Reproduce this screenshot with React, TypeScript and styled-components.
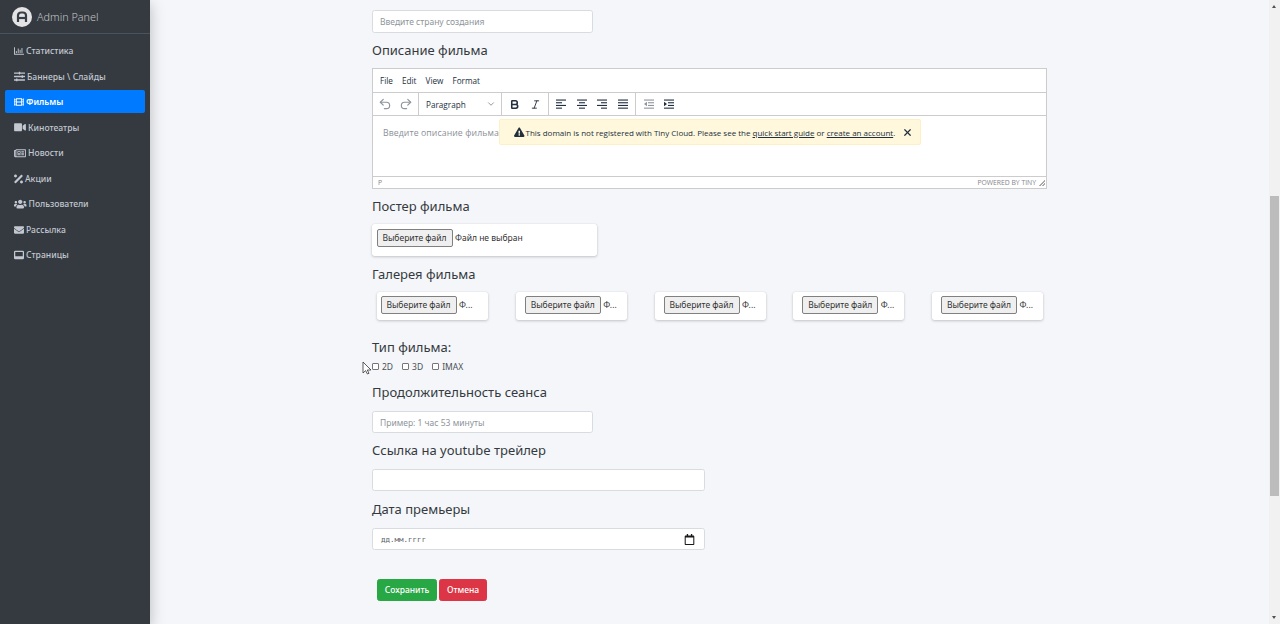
import React from 'react';
import styled, { createGlobalStyle } from 'styled-components';
import {
  FaRegChartBar,
  FaSlidersH,
  FaFilm,
  FaVideo,
  FaRegNewspaper,
  FaPercentage,
  FaUsers,
  FaEnvelope,
  FaExclamationTriangle,
  FaRegCalendar,
} from 'react-icons/fa';
import { Undo2, Redo2, Bold, Italic, ChevronDown, X } from 'lucide-react';

const GlobalStyle = createGlobalStyle`
  * { box-sizing: border-box; }
  html, body { margin: 0; height: 624px; overflow: hidden; background: #f4f6f9; }
  body { font-family: "Noto Sans", "Open Sans", sans-serif; color: #212529; }
`;

const Shell = styled.div`
  display: flex;
  height: 624px;
  width: 1280px;
`;

const Sidebar = styled.aside`
  width: 150px;
  flex: none;
  background: #343a40;
  box-shadow: 0 4px 14px rgba(0, 0, 0, 0.25);
`;

const Brand = styled.div`
  height: 34px;
  display: flex;
  align-items: center;
  gap: 5px;
  padding-left: 12px;
  border-bottom: 1px solid #4b545c;
  color: rgba(255, 255, 255, 0.7);
  font-size: 10.8px;
  font-weight: 300;
`;

const Nav = styled.nav`
  display: flex;
  flex-direction: column;
  gap: 2.5px;
  padding: 5px 5px 0;
`;

const NavItem = styled.a<{ $active?: boolean; $iconWidth: number; $iconHeight: number }>`
  height: 23px;
  display: flex;
  align-items: center;
  gap: 2px;
  padding: 1px 0 0 9px;
  border-radius: 2px;
  font-size: 8.6px;
  font-weight: ${(p) => (p.$active ? 600 : 500)};
  color: ${(p) => (p.$active ? '#fff' : '#c2c7d0')};
  background: ${(p) => (p.$active ? '#007bff' : 'transparent')};
  svg {
    width: ${(p) => p.$iconWidth}px;
    height: ${(p) => p.$iconHeight}px;
    flex: none;
  }
`;

const Main = styled.main`
  flex: 1;
  padding: 10px 0 0 222px;
  overflow: hidden;
`;

const Form = styled.form`
  width: 675px;
  display: flex;
  flex-direction: column;
  align-items: flex-start;
`;

const Heading = styled.label<{ $top?: number; $bottom?: number }>`
  height: 24px;
  line-height: 23px;
  font-size: 13px;
  color: #343a40;
  margin-top: ${(p) => p.$top ?? 6}px;
  margin-bottom: ${(p) => p.$bottom ?? 6}px;
`;

const Input = styled.input<{ $wide?: boolean; $tall?: boolean }>`
  width: ${(p) => (p.$wide ? 333 : 221)}px;
  height: ${(p) => (p.$tall ? 23 : 22)}px;
  padding: 0 7px;
  background: #fff;
  border: 1px solid #d8dce1;
  border-radius: 2.5px;
  font-family: inherit;
  font-size: 8.5px;
  color: #495057;
  outline: none;
  &::placeholder { color: #8e959b; opacity: 1; }
`;

const DateBox = styled.div`
  width: 333px;
  height: 22px;
  padding: 0 9px 0 8px;
  display: flex;
  align-items: center;
  justify-content: space-between;
  background: #fff;
  border: 1px solid #d8dce1;
  border-radius: 2.5px;
  font-family: "DejaVu Sans Mono", monospace;
  font-size: 7.5px;
  color: #5c6369;
  svg { width: 11px; height: 11px; color: #1a1a1a; }
`;

const Editor = styled.div`
  width: 675px;
  height: 121px;
  display: flex;
  flex-direction: column;
  background: #fff;
  border: 1px solid #ccc;
  font-family: "Open Sans", sans-serif;
  color: #222f3e;
`;

const MenuBar = styled.div`
  height: 24px;
  flex: none;
  display: flex;
  align-items: center;
  gap: 9px;
  padding-left: 7px;
  font-size: 8.2px;
  border-bottom: 1px solid #ccc;
`;

const ToolBar = styled.div`
  height: 23px;
  flex: none;
  display: flex;
  border-bottom: 1px solid #ccc;
`;

const ToolGroup = styled.div<{ $width: number }>`
  width: ${(p) => p.$width}px;
  display: flex;
  align-items: center;
  justify-content: center;
  border-right: 1px solid #ccc;
  &:last-child { border-right: 0; }
`;

const ToolButton = styled.span<{ $muted?: boolean }>`
  width: 20.5px;
  height: 20px;
  display: flex;
  align-items: center;
  justify-content: center;
  color: ${(p) => (p.$muted ? '#8f959c' : '#222f3e')};
`;

const FormatSelect = styled.div`
  flex: 1;
  display: flex;
  align-items: center;
  justify-content: space-between;
  padding: 0 5px 0 7px;
  font-size: 8.2px;
  color: #222f3e;
  svg { color: #7e858d; }
`;

const EditArea = styled.div`
  position: relative;
  flex: 1;
  padding: 11px 10px;
  font-size: 8.7px;
  color: #8a9096;
  letter-spacing: 0.1px;
`;

const Toast = styled.div`
  position: absolute;
  top: 3px;
  left: 126px;
  width: 422px;
  height: 26px;
  display: flex;
  align-items: center;
  padding-left: 14px;
  background: #fff8dc;
  border: 1px solid #fdf0c4;
  border-radius: 2px;
  font-size: 8px;
  letter-spacing: 0;
  color: #222f3e;
  a { color: inherit; text-decoration: underline; }
  svg { flex: none; }
`;

const ToastText = styled.span`
  margin-left: 1px;
  white-space: nowrap;
`;

const ToastClose = styled.span`
  margin-left: 7px;
  display: flex;
  color: #222f3e;
`;

const StatusBar = styled.div`
  height: 12px;
  flex: none;
  display: flex;
  align-items: center;
  justify-content: space-between;
  padding: 0 1px 0 5px;
  border-top: 1px solid #ccc;
  font-size: 6.8px;
  color: #7f868d;
`;

const StatusRight = styled.span`
  display: flex;
  align-items: center;
  gap: 3px;
`;

const FileCard = styled.div<{ $width: number; $height: number; $inset: number; $top: number }>`
  width: ${(p) => p.$width}px;
  height: ${(p) => p.$height}px;
  display: flex;
  align-items: flex-start;
  gap: 2.5px;
  padding: ${(p) => p.$top}px 0 0 ${(p) => p.$inset}px;
  background: #fff;
  border-radius: 2.5px;
  box-shadow: 0 0 1px rgba(0, 0, 0, 0.13), 0 1px 3px rgba(0, 0, 0, 0.2);
  font-size: 8.5px;
  line-height: 18px;
  color: #333;
  overflow: hidden;
`;

const FileButton = styled.span`
  width: 76px;
  height: 18px;
  flex: none;
  display: flex;
  align-items: center;
  justify-content: center;
  background: #efefef;
  border: 1px solid #808080;
  border-radius: 2px;
  font-size: 8.5px;
  color: #333;
`;

const Gallery = styled.div`
  width: 666px;
  margin-left: 5px;
  display: flex;
  justify-content: space-between;
`;

const CheckRow = styled.div`
  position: relative;
  height: 12px;
  display: flex;
  align-items: center;
  gap: 9px;
  font-size: 8.5px;
  color: #4a5056;
`;

const CheckLabel = styled.span`
  display: flex;
  align-items: center;
  gap: 3px;
  input {
    appearance: none;
    width: 7px;
    height: 7px;
    margin: 0;
    background: #fff;
    border: 1px solid #767676;
    border-radius: 1px;
  }
`;

const Cursor = styled.svg`
  position: absolute;
  left: -10px;
  top: 1px;
`;

const Actions = styled.div`
  display: flex;
  gap: 2px;
  margin: 29px 0 0 5px;
`;

const Button = styled.button<{ $color: string; $width: number }>`
  width: ${(p) => p.$width}px;
  height: 22px;
  padding: 0 0 1px;
  border: 1px solid ${(p) => p.$color};
  border-radius: 2.5px;
  background: ${(p) => p.$color};
  color: #fff;
  font-family: inherit;
  font-size: 8.5px;
  font-weight: 500;
`;

const ScrollTrack = styled.div`
  position: relative;
  width: 11px;
  flex: none;
  background: #f1f1f1;
`;

const ScrollThumb = styled.div`
  width: 9px;
  height: 300px;
  margin: 196px 0 0 1px;
  background: #bcbcbc;
`;

const ScrollArrow = styled.span<{ $down?: boolean }>`
  position: absolute;
  left: 3px;
  ${(p) => (p.$down ? 'bottom: 5px;' : 'top: 5px;')}
  border-left: 2.5px solid transparent;
  border-right: 2.5px solid transparent;
  ${(p) => (p.$down ? 'border-top: 3px solid #505050;' : 'border-bottom: 3px solid #505050;')}
`;

const Logo = () => (
  <svg width="20" height="20" viewBox="0 0 20 20">
    <circle cx="10" cy="10" r="10" fill="#e4e4e4" />
    <path d="M6 15V8.5A3 3 0 0 1 9 5.5h2a3 3 0 0 1 3 3V15" fill="none" stroke="#3a3f45" strokeWidth="2.2" />
    <path d="M6 11h8" stroke="#3a3f45" strokeWidth="2.2" />
  </svg>
);

const PagesIcon = () => (
  <svg viewBox="0 0 12 10" fill="currentColor">
    <path
      fillRule="evenodd"
      d="M1.5 0h9A1.5 1.5 0 0 1 12 1.5v7A1.5 1.5 0 0 1 10.5 10h-9A1.5 1.5 0 0 1 0 8.500v-7A1.5 1.5 0 0 1 1.5 0zM1.500 1.500v5h9v-5z"
    />
  </svg>
);

const Lines = ({ rows }: { rows: [number, number][] }) => (
  <svg width="12" height="12" viewBox="0 0 12 12" fill="currentColor">
    {rows.map(([x, w], i) => (
      <rect key={i} x={x} y={1.5 + i * 2.7} width={w} height="1.1" />
    ))}
  </svg>
);

const IndentIcon = ({ out }: { out?: boolean }) => (
  <svg width="12" height="12" viewBox="0 0 12 12" fill="currentColor">
    <rect x="1" y="1.5" width="10" height="1.1" />
    <rect x="5" y="4.2" width="6" height="1.1" />
    <rect x="5" y="6.9" width="6" height="1.1" />
    <rect x="1" y="9.6" width="10" height="1.1" />
    <path d={out ? 'M4 3.8v4.4L1 6z' : 'M1 3.8v4.4L4 6z'} />
  </svg>
);

const navItems = [
  { icon: <FaRegChartBar />, label: 'Статистика', w: 10, h: 10 },
  { icon: <FaSlidersH />, label: 'Баннеры \\ Слайды', w: 11, h: 11 },
  { icon: <FaFilm />, label: 'Фильмы', active: true, w: 10, h: 10 },
  { icon: <FaVideo />, label: 'Кинотеатры', w: 12, h: 10.5 },
  { icon: <FaRegNewspaper />, label: 'Новости', w: 12, h: 10.5 },
  { icon: <FaPercentage />, label: 'Акции', w: 9, h: 12 },
  { icon: <FaUsers />, label: 'Пользователи', w: 12.5, h: 10 },
  { icon: <FaEnvelope />, label: 'Рассылка', w: 10, h: 10 },
  { icon: <PagesIcon />, label: 'Страницы', w: 10, h: 10 },
];

const App = () => (
  <Shell>
    <GlobalStyle />
    <Sidebar>
      <Brand>
        <Logo />
        Admin Panel
      </Brand>
      <Nav>
        {navItems.map((item) => (
          <NavItem key={item.label} $active={item.active} $iconWidth={item.w} $iconHeight={item.h}>
            {item.icon}
            {item.label}
          </NavItem>
        ))}
      </Nav>
    </Sidebar>
    <Main>
      <Form>
        <Input $tall placeholder="Введите страну создания" />
        <Heading $bottom={5}>Описание фильма</Heading>
        <Editor>
          <MenuBar>
            <span>File</span>
            <span>Edit</span>
            <span>View</span>
            <span>Format</span>
          </MenuBar>
          <ToolBar>
            <ToolGroup $width={46}>
              <ToolButton $muted><Undo2 size={14} /></ToolButton>
              <ToolButton $muted><Redo2 size={14} /></ToolButton>
            </ToolGroup>
            <ToolGroup $width={83}>
              <FormatSelect>
                Paragraph
                <ChevronDown size={10} />
              </FormatSelect>
            </ToolGroup>
            <ToolGroup $width={47}>
              <ToolButton><Bold size={11} strokeWidth={3.4} /></ToolButton>
              <ToolButton><Italic size={11} /></ToolButton>
            </ToolGroup>
            <ToolGroup $width={87}>
              <ToolButton><Lines rows={[[1, 10], [1, 6], [1, 10], [1, 6]]} /></ToolButton>
              <ToolButton><Lines rows={[[1, 10], [3, 6], [1, 10], [3, 6]]} /></ToolButton>
              <ToolButton><Lines rows={[[1, 10], [5, 6], [1, 10], [5, 6]]} /></ToolButton>
              <ToolButton><Lines rows={[[1, 10], [1, 10], [1, 10], [1, 10]]} /></ToolButton>
            </ToolGroup>
            <ToolGroup $width={46}>
              <ToolButton $muted><IndentIcon out /></ToolButton>
              <ToolButton><IndentIcon /></ToolButton>
            </ToolGroup>
          </ToolBar>
          <EditArea>
            Введите описание фильма
            <Toast>
              <FaExclamationTriangle size={10.5} />
              <ToastText>
                This domain is not registered with Tiny Cloud. Please see the <a>quick start guide</a> or{' '}
                <a>create an account</a>.
              </ToastText>
              <ToastClose><X size={11} strokeWidth={2.6} /></ToastClose>
            </Toast>
          </EditArea>
          <StatusBar>
            <span>P</span>
            <StatusRight>
              POWERED BY TINY
              <svg width="6" height="6" viewBox="0 0 6 6" fill="#555">
                <path d="M6 0v1L1 6H0zM6 3v1L4 6H3z" />
              </svg>
            </StatusRight>
          </StatusBar>
        </Editor>
        <Heading $bottom={5}>Постер фильма</Heading>
        <FileCard $width={225} $height={32} $inset={4.5} $top={5}>
          <FileButton>Выберите файл</FileButton>
          Файл не выбран
        </FileCard>
        <Heading $top={7} $bottom={5}>Галерея фильма</Heading>
        <Gallery>
          {[0, 1, 2, 3, 4].map((n) => (
            <FileCard key={n} $width={111} $height={28} $inset={n === 0 ? 3.5 : 9} $top={4}>
              <FileButton>Выберите файл</FileButton>
              Ф...
            </FileCard>
          ))}
        </Gallery>
        <Heading $top={16} $bottom={0}>Тип фильма:</Heading>
        <CheckRow>
          <Cursor width="10" height="14" viewBox="0 0 10 14">
            <path d="M1 1v11l2.6-2.4L5.4 13l1.600-.7-1.700-3.300H9z" fill="#fff" stroke="#333" strokeWidth="0.8" />
          </Cursor>
          <CheckLabel><input type="checkbox" />2D</CheckLabel>
          <CheckLabel><input type="checkbox" />3D</CheckLabel>
          <CheckLabel><input type="checkbox" />IMAX</CheckLabel>
        </CheckRow>
        <Heading $top={9}>Продолжительность сеанса</Heading>
        <Input placeholder="Пример: 1 час 53 минуты" />
        <Heading>Ссылка на youtube трейлер</Heading>
        <Input $wide />
        <Heading $top={7}>Дата премьеры</Heading>
        <DateBox>
          дд.мм.гггг
          <FaRegCalendar />
        </DateBox>
        <Actions>
          <Button type="button" $color="#28a745" $width={60}>Сохранить</Button>
          <Button type="button" $color="#dc3545" $width={48}>Отмена</Button>
        </Actions>
      </Form>
    </Main>
    <ScrollTrack>
      <ScrollArrow />
      <ScrollThumb />
      <ScrollArrow $down />
    </ScrollTrack>
  </Shell>
);

export default App;
